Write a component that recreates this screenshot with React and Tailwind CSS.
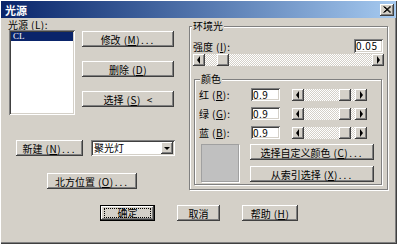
import React from "react";

const raised =
  "shadow-[inset_-1px_-1px_#404040,inset_1px_1px_#ffffff,inset_-2px_-2px_#808080,inset_2px_2px_#d4d0c8]";
const sunken =
  "shadow-[inset_1px_1px_#808080,inset_-1px_-1px_#ffffff,inset_2px_2px_#404040,inset_-2px_-2px_#d4d0c8]";
const track =
  "bg-[image:repeating-conic-gradient(#ffffff_0_25%,#d4d0c8_0_50%)] bg-[length:2px_2px]";

// mnemonic like " (M)..." in the half-width bitmap look
function Key({ k, dots, colon }) {
  return (
    <span className="ml-[3px] tracking-[0.5px]">
      (<u>{k}</u>){colon ? ":" : ""}
      {dots ? <span className="tracking-[2px] ml-[1px]">...</span> : null}
    </span>
  );
}

function Btn({ className = "", children }) {
  return (
    <div className={`h-[16px] flex items-center justify-center bg-[#d4d0c8] ${raised} ${className}`}>
      {children}
    </div>
  );
}

function Arrow({ dir }) {
  return (
    <div className={`w-[12px] h-[12px] shrink-0 flex items-center justify-center bg-[#d4d0c8] ${raised}`}>
      {dir === "left" ? (
        <div className="w-0 h-0 border-y-[4px] border-y-transparent border-r-[3px] border-r-black -ml-[1px]" />
      ) : (
        <div className="w-0 h-0 border-y-[4px] border-y-transparent border-l-[3px] border-l-black ml-[1px]" />
      )}
    </div>
  );
}

function Scroll({ className = "", pre, gapAfter }) {
  return (
    <div className={`h-[12px] flex ${className}`}>
      <Arrow dir="left" />
      <div className={`h-full ${track}`} style={{ width: pre }} />
      <div className={`w-[12px] h-full shrink-0 bg-[#d4d0c8] ${raised}`} />
      <div className={`h-full flex-1 ${track}`} style={{ minWidth: gapAfter }} />
      <Arrow dir="right" />
    </div>
  );
}

function Edit({ value, className = "" }) {
  return (
    <div className={`h-[13px] bg-white ${sunken} pl-[2px] text-[10px] leading-[13px] tracking-[0.5px] overflow-hidden ${className}`}>
      {value}
    </div>
  );
}

function ColorRow({ label, k }) {
  return (
    <div className="flex items-center h-[13px]">
      <div className="w-[52px] text-[10px] leading-[13px]">
        {label}
        <Key k={k} colon />
      </div>
      <Edit value="0.9" className="w-[29px]" />
      <Scroll className="ml-[12px] w-[75px]" pre={35} gapAfter={2} />
    </div>
  );
}

export default function App() {
  return (
    <div
      className={`w-[397px] h-[244px] bg-[#d4d0c8] flex flex-col text-black font-['Noto_Sans_CJK_SC','Noto_Sans',sans-serif] shadow-[inset_1px_1px_#ffffff,inset_-1px_-1px_#404040,inset_-2px_-2px_#808080] overflow-hidden`}
    >
      {/* title bar */}
      <div className="mx-[1px] mt-[1px] h-[17px] flex items-center justify-between pl-[4px] pr-[2px] bg-gradient-to-r from-[#0a246a] to-[#a6caf0]">
        <span className="text-white font-bold text-[11px] leading-[12px]">光源</span>
        <div className={`w-[14px] h-[12px] flex items-center justify-center bg-[#d4d0c8] ${raised}`}>
          <svg width="8" height="7" viewBox="0 0 8 7">
            <path d="M0.5 0.5 L7 6.5 M1.5 0.5 L8 6.5 M7 0.5 L0.5 6.5 M8 0.5 L1.5 6.5" stroke="black" strokeWidth="1" />
          </svg>
        </div>
      </div>

      <div className="flex">
        {/* left column */}
        <div className="ml-[8px] w-[167px] flex flex-col">
          <div className="mt-[1px] h-[11px] text-[10px] leading-[11px]">
            光源
            <Key k="L" colon />
          </div>
          <div className="flex">
            <div className={`ml-[1px] w-[66px] h-[85px] bg-white ${sunken} p-[2px]`}>
              <div className="h-[9px] bg-[#0a246a] text-white text-[9px] leading-[9px] pl-[2px] font-['Liberation_Serif',serif]">
                CL
              </div>
            </div>
            <div className="ml-[7px] mt-[1px] w-[92px] flex flex-col gap-[14px] text-[10px]">
              <Btn>
                修改
                <Key k="M" dots />
              </Btn>
              <Btn>
                删除
                <Key k="D" />
              </Btn>
              <Btn>
                选择
                <Key k="S" />
                <span className="ml-[6px]">&lt;</span>
              </Btn>
            </div>
          </div>
          <div className="mt-[25px] flex text-[10px]">
            <Btn className="ml-[8px] w-[67px]">
              新建
              <Key k="N" dots />
            </Btn>
            <div className={`ml-[8px] w-[84px] h-[16px] bg-white ${sunken} flex items-center p-[2px]`}>
              <span className="flex-1 pl-[1px] leading-[12px]">聚光灯</span>
              <div className={`w-[12px] h-[12px] flex items-center justify-center bg-[#d4d0c8] ${raised}`}>
                <div className="w-0 h-0 border-x-[3px] border-x-transparent border-t-[3px] border-t-black" />
              </div>
            </div>
          </div>
          <Btn className="mt-[17px] ml-[39px] w-[90px] text-[10px]">
            北方位置
            <Key k="O" dots />
          </Btn>
        </div>

        {/* ambient group */}
        <div className="relative ml-[14px] mt-[8px] w-[199px] h-[164px] border border-[#808080] shadow-[inset_1px_1px_#ffffff,1px_1px_#ffffff] px-[3px] pt-[12px]">
          <span className="absolute -top-[7px] left-[2px] bg-[#d4d0c8] px-[1px] text-[10px] leading-[12px]">环境光</span>
          <div className="flex items-center justify-between h-[14px]">
            <span className="text-[10px] leading-[13px]">
              强度
              <Key k="I" colon />
            </span>
            <Edit value="0.05" className="w-[29px] h-[14px] mr-[1px]" />
          </div>
          <Scroll className="mt-[1px] w-full" pre={12} gapAfter={0} />

          {/* colour group */}
          <div className="relative mt-[13px] ml-[1px] w-[188px] h-[106px] border border-[#808080] shadow-[inset_1px_1px_#ffffff,1px_1px_#ffffff] pl-[4px] pt-[8px]">
            <span className="absolute -top-[7px] left-[5px] bg-[#d4d0c8] px-[1px] text-[10px] leading-[12px]">颜色</span>
            <div className="flex flex-col gap-[6px]">
              <ColorRow label="红" k="R" />
              <ColorRow label="绿" k="G" />
              <ColorRow label="蓝" k="B" />
            </div>
            <div className="mt-[5px] flex">
              <div className="ml-[2px] w-[38px] h-[38px] bg-[#c0c0c0] border border-[#a0a0a0] shadow-[1px_1px_#ffffff]" />
              <div className="ml-[11px] flex flex-col gap-[6px] text-[10px]">
                <Btn className="w-[124px]">
                  选择自定义颜色
                  <Key k="C" dots />
                </Btn>
                <Btn className="w-[124px]">
                  从索引选择
                  <Key k="X" dots />
                </Btn>
              </div>
            </div>
          </div>
        </div>
      </div>

      {/* bottom buttons */}
      <div className="mt-[15px] pl-[100px] flex gap-[22px] text-[10px]">
        <div className="w-[55px] h-[16px] border border-black">
          <div className="w-full h-full flex items-center justify-center bg-[#d4d0c8] shadow-[inset_-1px_-1px_#404040,inset_1px_1px_#ffffff,inset_-2px_-2px_#808080]">
            <div className="w-[47px] h-[10px] border border-dotted border-black flex items-center justify-center leading-[10px]">
              确定
            </div>
          </div>
        </div>
        <Btn className="w-[43px]">取消</Btn>
        <Btn className="w-[56px]">
          帮助
          <Key k="H" />
        </Btn>
      </div>
    </div>
  );
}
